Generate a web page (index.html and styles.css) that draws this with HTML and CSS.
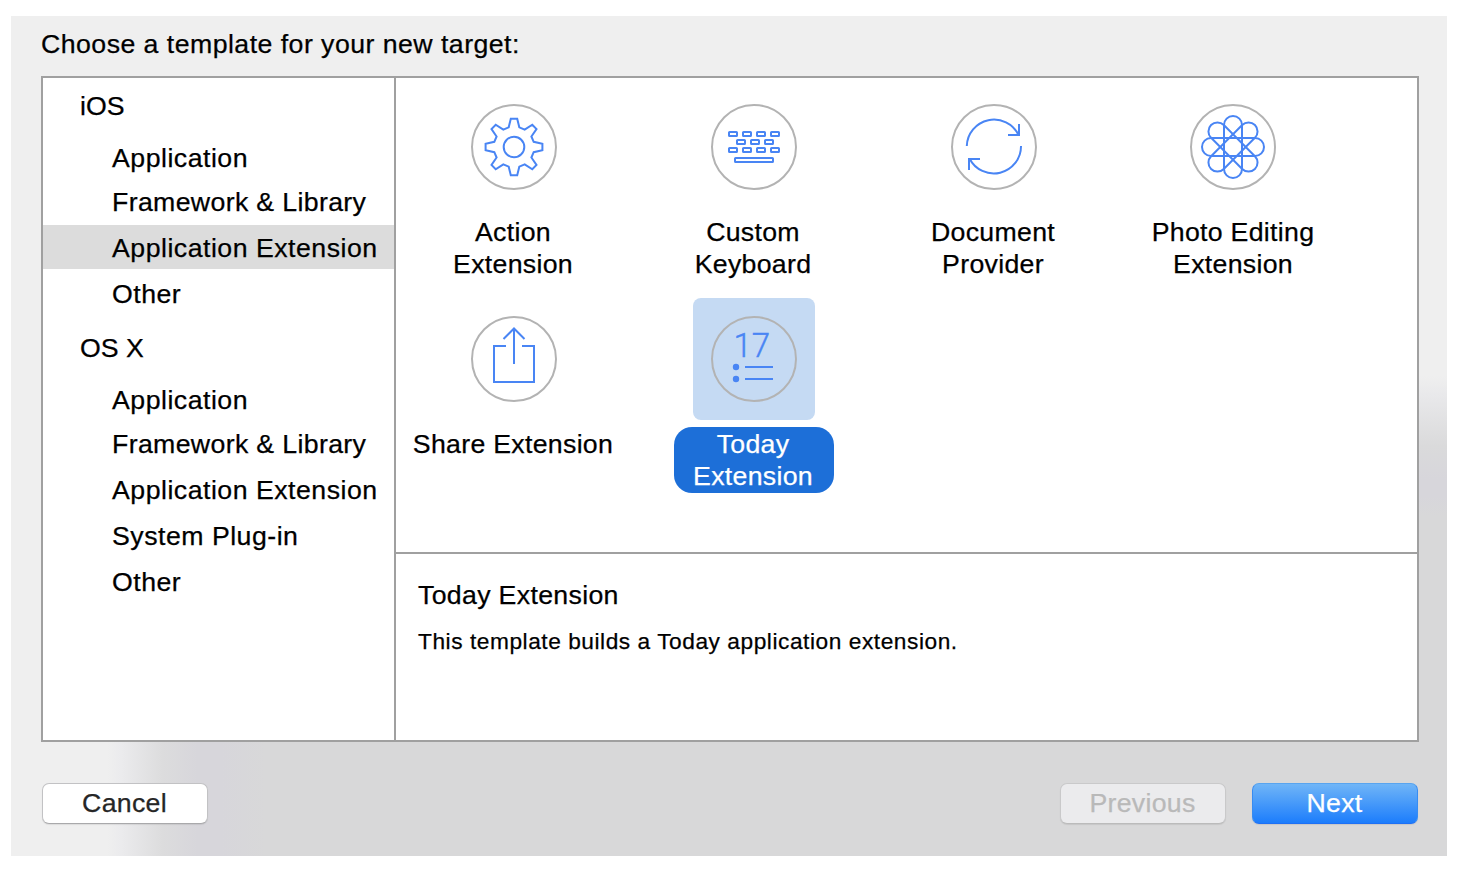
FILE: index.html
```html
<!DOCTYPE html>
<html lang="en">
<head>
<meta charset="utf-8">
<title>Choose a template</title>
<link rel="stylesheet" href="styles.css">
</head>
<body>
<main class="sheet">
  <h1 class="title">Choose a template for your new target:</h1>
  <section class="panel">
    <nav class="sidebar">
      <h2 class="group">iOS</h2>
      <ul class="list">
        <li class="item">Application</li>
        <li class="item tight">Framework &amp; Library</li>
        <li class="item selected">Application Extension</li>
        <li class="item">Other</li>
      </ul>
      <h2 class="group">OS X</h2>
      <ul class="list">
        <li class="item">Application</li>
        <li class="item tight">Framework &amp; Library</li>
        <li class="item spaced">Application Extension</li>
        <li class="item">System Plug-in</li>
        <li class="item">Other</li>
      </ul>
    </nav>
    <div class="content">
      <div class="grid">
        <div class="template">
          <svg class="icon" viewBox="-61 -61 122 122"><circle class="ring" r="42"/>
            <g class="ink"><circle r="10.3"/>
            <path d="M-3.2-28.2H3.2L5.3-19.7 10.7-17.3 18.3-22.3 22.5-18 17.4-10.5 19.7-5.2 28.4-3.3V3.3L19.7 5.2 17.4 10.5 22.5 18 18.3 22.3 10.7 17.3 5.3 19.7 3.2 28.2H-3.2L-5.3 19.7-10.7 17.3-18.3 22.3-22.5 18-17.4 10.5-19.7 5.2-28.4 3.3V-3.3L-19.7-5.2-17.4-10.5-22.5-18-18.3-22.3-10.7-17.3-5.3-19.7Z"/></g></svg>
          <span class="label">Action<br>Extension</span>
        </div>
        <div class="template">
          <svg class="icon" viewBox="-61 -61 122 122"><circle class="ring" r="42"/>
            <g class="ink"><rect x="-25" y="-15" width="8" height="4" rx=".6"/><rect x="-11" y="-15" width="8" height="4" rx=".6"/><rect x="3" y="-15" width="8" height="4" rx=".6"/><rect x="17" y="-15" width="8" height="4" rx=".6"/>
            <rect x="-17" y="-7" width="8" height="4" rx=".6"/><rect x="-3" y="-7" width="8" height="4" rx=".6"/><rect x="11" y="-7" width="8" height="4" rx=".6"/>
            <rect x="-25" y="1" width="8" height="4" rx=".6"/><rect x="-11" y="1" width="8" height="4" rx=".6"/><rect x="3" y="1" width="8" height="4" rx=".6"/><rect x="17" y="1" width="8" height="4" rx=".6"/>
            <rect x="-19" y="11" width="38" height="4" rx=".6"/></g></svg>
          <span class="label">Custom<br>Keyboard</span>
        </div>
        <div class="template">
          <svg class="icon" viewBox="-61 -61 122 122"><circle class="ring" r="42"/>
            <g class="ink"><path d="M-27.2-1A27.2 27.2 0 0 1 24.5-12M25-23V-12H14"/><path d="M27-1A27.2 27.2 0 0 1-24.5 11.5M-25 23V12H-14"/></g></svg>
          <span class="label">Document<br>Provider</span>
        </div>
        <div class="template">
          <svg class="icon photo" viewBox="-61 -61 122 122"><circle class="ring" r="42"/>
            <g class="ink"><rect x="-9" y="-31" width="18" height="62" rx="9"/><rect x="-9" y="-31" width="18" height="62" rx="9" transform="rotate(45)"/><rect x="-9" y="-31" width="18" height="62" rx="9" transform="rotate(90)"/><rect x="-9" y="-31" width="18" height="62" rx="9" transform="rotate(135)"/></g></svg>
          <span class="label">Photo Editing<br>Extension</span>
        </div>
        <div class="template">
          <svg class="icon" viewBox="-61 -61 122 122"><circle class="ring" r="42"/>
            <g class="ink"><path d="M-8-13H-20V23H20V-13H8M0 5V-30M-10.500-20L0-30.500 10.500-20"/></g></svg>
          <span class="label">Share Extension</span>
        </div>
        <div class="template active">
          <svg class="icon" viewBox="-61 -61 122 122"><circle class="ring" r="42"/>
            <text class="day" x="-20.500" y="-2">17</text>
            <g class="ink"><path d="M-9 8H19M-9 20H19"/></g><g class="dots"><circle cx="-18" cy="8" r="3.200"/><circle cx="-18" cy="20" r="3.200"/></g></svg>
          <span class="label">Today<br>Extension</span>
        </div>
      </div>
      <div class="details">
        <h3 class="name">Today Extension</h3>
        <p class="desc">This template builds a Today application extension.</p>
      </div>
    </div>
  </section>
  <footer class="actions">
    <button class="btn">Cancel</button>
    <button class="btn disabled" disabled>Previous</button>
    <button class="btn primary">Next</button>
  </footer>
</main>
</body>
</html>
```
FILE: styles.css
```css
* { box-sizing: border-box; }
body {
  margin: 0;
  padding: 16px 0 0 11px;
  background: #fff;
  color: #000;
  font: 26.7px/32px "Liberation Sans", Arial, sans-serif;
  letter-spacing: 0.5px;
  -webkit-text-stroke: 0.25px;
}
h1, h2, h3, p, ul { margin: 0; padding: 0; font-weight: normal; font-size: inherit; list-style: none; }
.sheet {
  width: 1436px;
  height: 840px;
  padding: 0 28px 0 30px;
  background:
    linear-gradient(90deg, #efefef 96px, #ebebed 110px, #dcdcdd 152px, #d7d6db 186px, #d7d6db 210px, #d8d8d9 255px) left bottom / 100% 116px no-repeat,
    linear-gradient(180deg, #efefef 360px, #e9e9eb 378px, #dadadb 430px, #d7d6db 463px, #d7d6db 480px, #d8d8d9 500px) right top / 40px 100% no-repeat,
    #efefef;
}
.title { height: 60px; padding-top: 12px; letter-spacing: 0.46px; }
.panel {
  display: grid;
  grid-template-columns: 353px 1fr;
  height: 666px;
  border: 2px solid #a0a0a0;
  background: #fff;
}
.sidebar { border-right: 2px solid #a0a0a0; white-space: nowrap; }
.group { height: 58px; padding: 12px 0 0 37px; letter-spacing: 0; }
.list + .group { padding-top: 16px; height: 62px; }
.list { display: flex; flex-direction: column; }
.item { height: 44px; padding: 6px 0 0 69px; }
.item.tight { letter-spacing: 0.35px; }
.item.selected { margin-top: 1px; padding-top: 7px; background: #dcdcdc; }
.item.spaced { margin-top: 2px; }
.selected + .item { margin-top: 3px; }
.spaced ~ .item { margin-top: 2px; }
.content { display: grid; grid-template-rows: 474px 1fr; }
.grid {
  display: grid;
  grid-template-columns: repeat(4, 240px);
  grid-template-rows: 212px 212px;
  margin-left: -2px;
  padding-top: 8px;
}
.template { display: flex; flex-direction: column; align-items: center; gap: 7px; text-align: center; }
.icon { width: 122px; height: 122px; border-radius: 8px; }
.photo { margin-right: 2px; }
.label { padding: 1px 2px 1px 0; white-space: nowrap; letter-spacing: 0.3px; }
.active .icon { background: #c5daf3; }
.active .label { width: 160px; height: 66px; border-radius: 18px; background: #1d6fd8; color: #fff; }
.ring { fill: none; stroke: #b3b3b3; stroke-width: 2; }
.ink { fill: none; stroke: #4985f4; stroke-width: 2; }
.dots { fill: #4985f4; }
.day { fill: #4985f4; stroke: #4985f4; stroke-width: 0.4px; font-family: Roboto, sans-serif; font-weight: 300; font-size: 33px; letter-spacing: 0; }
.details { border-top: 2px solid #a0a0a0; padding: 25px 22px 0; }
.name { letter-spacing: 0.33px; }
.desc { margin-top: 14px; font-size: 22.7px; letter-spacing: 0.55px; }
.actions { display: flex; padding: 41px 1px 0; }
.btn {
  width: 166px;
  height: 41px;
  padding: 0 1px 1px 0;
  border: 1px solid #c2c2c4;
  border-bottom-color: #a9a9ab;
  border-radius: 7px;
  background: #fff;
  box-shadow: 0 1px 1px rgba(0, 0, 0, 0.08);
  color: #262626;
  font: inherit;
  letter-spacing: 0.3px;
}
.btn.disabled { margin-left: auto; margin-right: 26px; background: #ebebed; border-color: #c9c9ca; border-bottom-color: #bbb; color: #b9b9b9; }
.btn.primary { border-color: #58a4ef #378cf2 #1e70f5; background: linear-gradient(#70b5f7, #1c7dfc); color: #fff; }
```
